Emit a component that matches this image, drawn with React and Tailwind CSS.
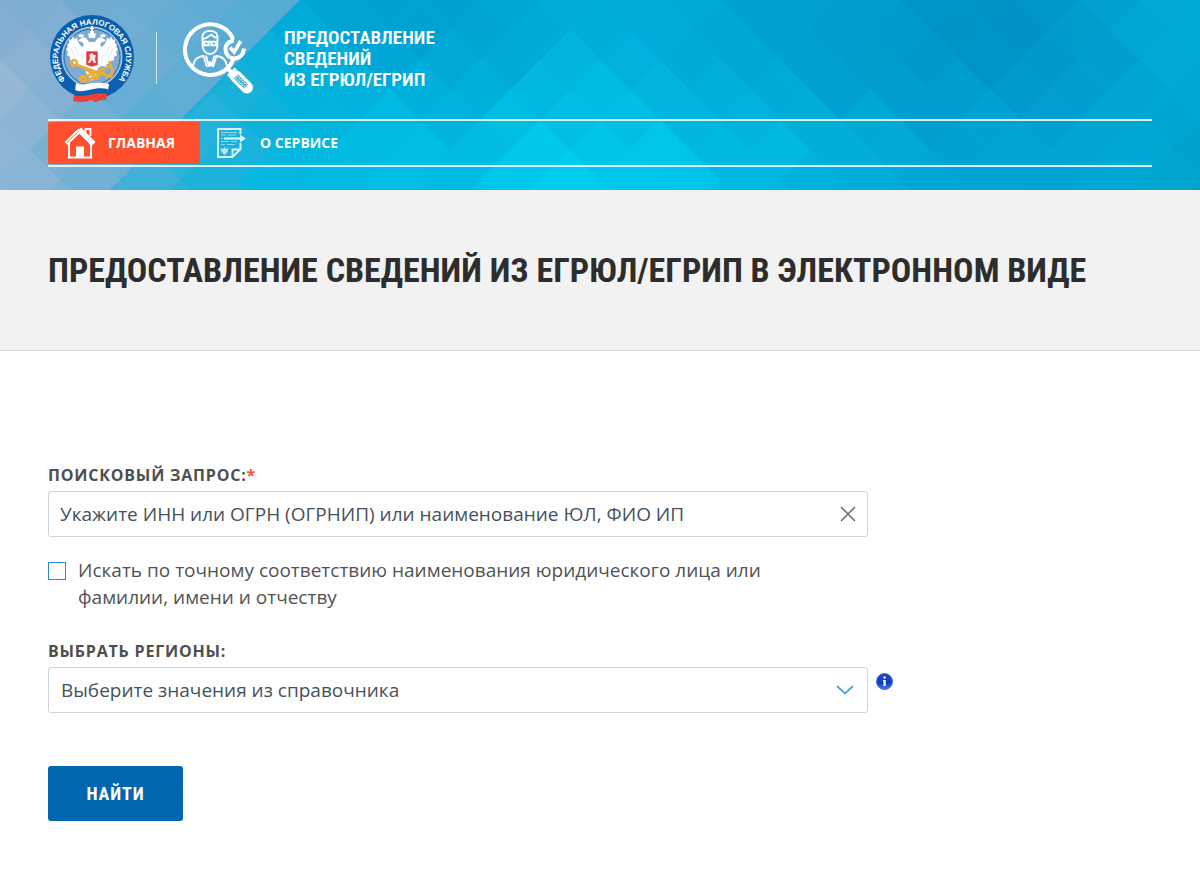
import React, { useState } from "react";

// colour samples for the mosaic: x, y, r, g, b
const GREY_SAMPLES = [
    [0, 90, 149, 184, 212],
    [0, 0, 125, 172, 208],
    [60, 60, 135, 176, 211],
    [100, 10, 112, 172, 208],
    [150, 50, 108, 174, 211],
    [200, 20, 98, 172, 211],
    [150, 110, 88, 174, 212],
    [240, 30, 84, 172, 211],
    [270, 0, 84, 172, 211],
    [20, 180, 140, 182, 213],
    [80, 170, 113, 176, 212],
];

const CYAN_SAMPLES = [
    [140, 180, 72, 176, 214],
    [180, 140, 50, 178, 216],
    [210, 180, 24, 178, 218],
    [300, 30, 0, 172, 218],
    [240, 90, 26, 176, 216],
    [310, 90, 0, 178, 220],
    [300, 170, 0, 186, 226],
    [400, 150, 0, 191, 230],
    [360, 10, 0, 160, 209],
    [440, 30, 0, 160, 209],
    [500, 30, 0, 164, 213],
    [450, 90, 0, 176, 220],
    [550, 90, 0, 182, 224],
    [540, 150, 0, 199, 235],
    [560, 185, 0, 206, 240],
    [640, 30, 0, 171, 218],
    [620, 110, 0, 188, 228],
    [660, 165, 0, 200, 235],
    [720, 60, 0, 168, 215],
    [720, 110, 0, 178, 221],
    [780, 20, 0, 159, 208],
    [760, 160, 0, 186, 226],
    [860, 60, 0, 156, 206],
    [860, 160, 0, 174, 219],
    [960, 30, 0, 146, 200],
    [1010, 40, 0, 145, 199],
    [940, 100, 0, 158, 208],
    [1000, 150, 0, 165, 214],
    [1080, 60, 0, 156, 206],
    [1120, 120, 0, 166, 213],
    [1180, 40, 0, 170, 217],
    [1150, 170, 0, 170, 212],
    [1200, 185, 0, 158, 202],
];

const mixSamples = (x, y) => {
    const samples = x + y < 300 ? GREY_SAMPLES : CYAN_SAMPLES;
    let total = 0;
    const sum = [0, 0, 0];
    samples.forEach(([sx, sy, ...rgb]) => {
        const weight = 1 / ((sx - x) ** 2 + (sy - y) ** 2 + 1400) ** 2;
        total += weight;
        rgb.forEach((value, i) => {
            sum[i] += value * weight;
        });
    });
    return `rgb(${sum.map((value) => Math.round(value / total)).join(",")})`;
};

const tiles = [];
for (let row = 0; row <= 7; row++) {
    for (let col = 0; col <= 41; col++) {
        const x = col * 30;
        const y = row * 30;
        // only every second crossing is the middle of a diamond
        if ((row + col) % 2 === 1) {
            tiles.push({ x, y, fill: mixSamples(x, y) });
        }
    }
}

const Mosaic = () => (
    <svg
        className="absolute inset-0 w-full h-full"
        viewBox="0 0 1200 190"
        preserveAspectRatio="xMidYMid slice"
        aria-hidden="true"
    >
        {tiles.map(({ x, y, fill }) => (
            <path
                key={`${x}-${y}`}
                d={`M${x} ${y - 30}l30 30l-30 30l-30 -30z`}
                fill={fill}
                stroke={fill}
                strokeWidth="0.6"
            />
        ))}
        <path d="M600 60l130 130H470z" fill="#00e0ff" opacity="0.06" />
    </svg>
);

const Emblem = () => (
    <svg className="w-[88px] h-[92px]" viewBox="0 0 88 92" role="img" aria-label="ФНС России">
        <defs>
            <path id="ring" d="M18.5 69A34 34 0 1 1 69.5 69" />
        </defs>
        <circle cx="44" cy="45" r="42" fill="#0a5fae" />
        <circle cx="44" cy="45" r="30" fill="#7fabd0" stroke="#d5e6f3" strokeWidth="0.8" />
        <circle cx="44" cy="45" r="28" fill="none" stroke="#0a5fae" strokeWidth="0.8" />
        <text fill="#fff" fontSize="8" fontWeight="700" fontFamily="Liberation Sans, sans-serif">
            <textPath href="#ring" startOffset="50%" textAnchor="middle">
                ФЕДЕРАЛЬНАЯ НАЛОГОВАЯ СЛУЖБА
            </textPath>
        </text>
        {/* eagle */}
        <g fill="#fff">
            <path d="M41 30c-2-4-5-6-8-4l-3 3 4 1c2 1 2 3 1 5-3-1-5-4-6-9l-3 1-1-3-2 4-2-1v4l-2 1 1 3-2 2 2 3-1 3 3 2 0 3 3 1 1 3 3 0 1 3 4-1 4 2h6z" />
            <path d="M47 30c2-4 5-6 8-4l3 3-4 1c-2 1-2 3-1 5 3-1 5-4 6-9l3 1 1-3 2 4 2-1v4l2 1-1 3 2 2-2 3 1 3-3 2 0 3-3 1-1 3-3 0-1 3-4-1-4 2h-6z" />
            <path d="M38 30h12v31l-6 8-6-8z" />
            <path d="M41 26l-1-5 2 1v-3h1v-2h-1v-1h1v-2h2v2h1v1h-1v2h1v3l2-1-1 5zM31 25l-1-3 2 1 1-2 1 2 2-1-1 3zM53 25l-1-3 2 1 1-2 1 2 2-1-1 3z" />
        </g>
        <path d="M27 34l3 10M23 36l4 10M61 34l-3 10M65 36l-4 10M33 42l1 8M55 42l-1 8" stroke="#c3d7e8" strokeWidth="0.6" />
        {/* crossed key and anchor */}
        <g fill="none" stroke="#e8ae3c" strokeWidth="2.6">
            <circle cx="26" cy="51" r="3" />
            <path d="M29 53l31 11M32 67l30-13M61 49l4 11M58 66l6-5-1 5M33 54l12 8M40 68l17-8" />
            <circle cx="35" cy="67" r="3" />
            <circle cx="48" cy="64" r="3" />
        </g>
        <path d="M38 39h12v14l-6 2-6-2z" fill="#e2373f" stroke="#fff" strokeWidth="0.6" />
        <path d="M41 43l3-2 2 2 2 0-1 4 1 4h-2l-2-3-2 3h-2l2-5z" fill="#fbe1e0" />
        {/* ribbon */}
        <path d="M28 71c8 5 14-3 33 1l-1 7c-14-3-22 5-33 1z" fill="#fff" />
        <path d="M27 78c9 4 18-4 33-1l-1 7c-12-3-22 5-33 1z" fill="#0a5fae" />
        <path d="M26 83c9 4 20-4 33-1l-1 6c-4 0-5 0-8 1-2 2-4 1-6-1-7 2-12 3-19 1z" fill="#ee4035" />
    </svg>
);

const SearchPersonIcon = () => (
    <svg className="w-[72px] h-[72px]" viewBox="0 0 72 72" fill="none" stroke="#fff" aria-hidden="true">
        <path d="M50.5 15.5A25.3 25.3 0 1 0 46 45.7Q50 42 51.5 36" strokeWidth="4" />
        <path d="M50.5 14.5L50 19Q43.5 21 43.5 27.5Q44 36 52.5 36.5Q61 36 62 26.5" strokeWidth="4" />
        <path d="M48 25.5l4.2 4.5 6.5-11" strokeWidth="3.6" />
        <path d="M44 45l6 6" strokeWidth="4" />
        <path d="M54 54.5L65 65.5" strokeWidth="12" strokeLinecap="round" />
        <path d="M54 47l-7.5 7.5" strokeWidth="4" />
        <path d="M54 54.5L64 64.5" stroke="#47b0d8" strokeWidth="6" />
        <path d="M53.5 56L62.5 65M55.5 54L64.5 63" strokeWidth="1.2" strokeDasharray="1.2 1.2" />
        <g strokeWidth="1.8">
            <path d="M20.5 18.5C19.5 11 23 8.8 28 8.8S36.5 11 35.5 18.5V24C35 29 31.5 32 28 32S21 29 20.5 24z" />
            <path d="M20.5 17C25 17 27 13.5 29.5 12.5C31.5 15 34 16 35.5 16" />
            <path d="M20.5 19.8H35.5M22 20v3.2h4.6V20M29.4 20v3.2H34V20" strokeWidth="2" />
            <path d="M10.5 45.5C12 39 13.5 35 21.5 34L25 45M45.5 45.5C44 39 42.5 35 34.5 34L31 45" />
            <path d="M24 33.5l3 11 1.2-5 1.2 5 3-11" />
        </g>
    </svg>
);

const HouseIcon = () => (
    <svg className="w-8 h-8" viewBox="0 0 32 32" fill="none" stroke="#fff" aria-hidden="true">
        <path d="M5 15.5V30.5H27V15" strokeWidth="2" />
        <path d="M21.5 5V2H26.5V9" strokeWidth="1.8" />
        <path d="M2 16.5L16 3" strokeWidth="4.5" />
        <path d="M3 15.5L14.5 4.5" stroke="#ff6a4b" strokeWidth="1" />
        <path d="M15 2.5L29.5 17" strokeWidth="6" />
        <path d="M6 18L16 8L25 17" stroke="#ff4f2c" strokeWidth="1" />
        <path d="M12 19.5H20V31H12z" fill="#fff" stroke="none" />
    </svg>
);

const DocumentIcon = () => (
    <svg className="w-8 h-8 opacity-85" viewBox="0 0 32 32" fill="none" stroke="#fff" aria-hidden="true">
        <path d="M24.5 16V22L16.5 30H2V2H24.5V7" strokeWidth="2" />
        <path d="M16.5 30V22.5H24.5" strokeWidth="1.8" />
        <path d="M8 11.5H25" strokeWidth="2.2" />
        <path d="M24 7.5L30 11.5L24 15.5z" fill="#fff" stroke="none" />
        <path d="M5 5.5H21M5 8H10M12 8H20M5 11.5H7M5 14.5H13M15 14.5H21M5 17.5H9M11 17.5H19" strokeWidth="1.2" opacity="0.6" />
        <path d="M4.5 21l2.5 1 1.5-2 1.5 2 2.5-1-1 4-3 3-3-3z" fill="#fff" stroke="none" opacity="0.8" />
    </svg>
);

const InfoIcon = () => (
    <svg className="w-[17px] h-[17px]" viewBox="0 0 17 17" aria-hidden="true">
        <defs>
            <linearGradient id="info" x1="0" y1="0" x2="0" y2="1">
                <stop offset="0" stopColor="#1c3fb0" />
                <stop offset="0.48" stopColor="#1648c8" />
                <stop offset="0.52" stopColor="#0b35bd" />
                <stop offset="1" stopColor="#3f7cf0" />
            </linearGradient>
        </defs>
        <circle cx="8.5" cy="8.5" r="8" fill="url(#info)" stroke="#4b6fd0" />
        <path d="M7.5 3.5h2.2v2H7.5zM7 7h2.7v6H7.5V8H7z" fill="#fff" />
    </svg>
);

const labelClass = "block text-base leading-6 font-bold tracking-wider uppercase text-[#4f4f4f]";

const App = () => {
    const [query, setQuery] = useState("");
    const [exact, setExact] = useState(false);

    return (
        <div className="min-h-screen bg-white font-['Open_Sans',sans-serif]">
            <header className="relative overflow-hidden bg-[#00aedb] px-12 pt-3 pb-[23px] text-white">
                <Mosaic />
                <div className="relative">
                    <div className="flex items-center pb-[15px]">
                        <a href="#fns">
                            <Emblem />
                        </a>
                        <span className="ml-5 h-[52px] w-px bg-white/70" />
                        <a href="#egrul" className="ml-[25px] flex items-center gap-[30px]">
                            <SearchPersonIcon />
                            <span className="font-['Roboto_Condensed',Roboto,sans-serif] text-[19px] leading-[21px] font-semibold">
                                <span className="block">ПРЕДОСТАВЛЕНИЕ</span>
                                <span className="block">СВЕДЕНИЙ</span>
                                <span className="block">ИЗ ЕГРЮЛ/ЕГРИП</span>
                            </span>
                        </a>
                    </div>
                    <nav className="flex border-y-2 border-white/85 py-px text-sm font-bold">
                        <a href="#home" className="flex h-[42px] items-center gap-3 rounded-xs bg-[#ff4f2c] pr-[25px] pl-4">
                            <HouseIcon />
                            ГЛАВНАЯ
                        </a>
                        <a href="#about" className="flex h-[42px] items-center gap-3 pr-[25px] pl-4">
                            <DocumentIcon />
                            О СЕРВИСЕ
                        </a>
                    </nav>
                </div>
            </header>

            <section className="border-b border-[#d9d9d9] bg-[#f2f2f2] px-12 py-14">
                <h1 className="font-['Roboto_Condensed',Roboto,sans-serif] text-[34px] leading-[48px] font-bold uppercase text-[#2d2d2d]">
                    Предоставление сведений из ЕГРЮЛ/ЕГРИП в электронном виде
                </h1>
            </section>

            <main className="px-12 pt-28 pb-14">
                <form onSubmit={(e) => e.preventDefault()}>
                    <label htmlFor="query" className={labelClass}>
                        Поисковый запрос:<span className="text-[#ff4f2c]">*</span>
                    </label>
                    <div className="relative mt-1 max-w-[820px]">
                        <input
                            id="query"
                            type="text"
                            value={query}
                            onChange={(e) => setQuery(e.target.value)}
                            placeholder="Укажите ИНН или ОГРН (ОГРНИП) или наименование ЮЛ, ФИО ИП"
                            className="h-[46px] w-full rounded-[3px] border border-[#cbd3d9] bg-white pr-12 pl-[11px] text-[19px] text-[#46515a] placeholder:text-[#46515a] focus:outline-none"
                        />
                        <button
                            type="button"
                            aria-label="Очистить"
                            onClick={() => setQuery("")}
                            className="absolute inset-y-0 right-3 flex items-center"
                        >
                            <svg className="w-4 h-4" viewBox="0 0 16 16" stroke="#6a6a6a" strokeWidth="1.5">
                                <path d="M1 1L15 15M15 1L1 15" />
                            </svg>
                        </button>
                    </div>

                    <label className="mt-5 flex max-w-3xl items-start gap-3 text-[19px] leading-[27px] text-[#525252]">
                        <input
                            type="checkbox"
                            checked={exact}
                            onChange={(e) => setExact(e.target.checked)}
                            className="mt-[5px] h-[18px] w-[18px] shrink-0 appearance-none border border-[#2b8cc4] bg-white checked:bg-[#0066b0]"
                        />
                        Искать по точному соответствию наименования юридического лица или фамилии, имени и отчеству
                    </label>

                    <label htmlFor="regions" className={`${labelClass} mt-7`}>
                        Выбрать регионы:
                    </label>
                    <div className="mt-1 flex items-start gap-2">
                        <div className="relative w-full max-w-[820px]">
                            <select
                                id="regions"
                                className="h-[46px] w-full appearance-none rounded-[3px] border border-[#cbd3d9] bg-white pr-12 pl-3 text-[19px] text-[#46515a] focus:outline-none"
                            >
                                <option>Выберите значения из справочника</option>
                            </select>
                            <svg
                                className="pointer-events-none absolute top-[18px] right-3.5 h-2.5 w-[18px]"
                                viewBox="0 0 18 10"
                                fill="none"
                                stroke="#4ba6d4"
                                strokeWidth="1.8"
                            >
                                <path d="M1 1L9 8.5L17 1" />
                            </svg>
                        </div>
                        <button type="button" aria-label="Справка" className="mt-1.5 shrink-0">
                            <InfoIcon />
                        </button>
                    </div>

                    <button
                        type="submit"
                        className="mt-[53px] h-[55px] w-[135px] rounded-[3px] bg-[#0066b0] font-['Roboto_Condensed',Roboto,sans-serif] text-lg font-bold tracking-wider text-white"
                    >
                        НАЙТИ
                    </button>
                </form>
            </main>
        </div>
    );
};

export default App;
